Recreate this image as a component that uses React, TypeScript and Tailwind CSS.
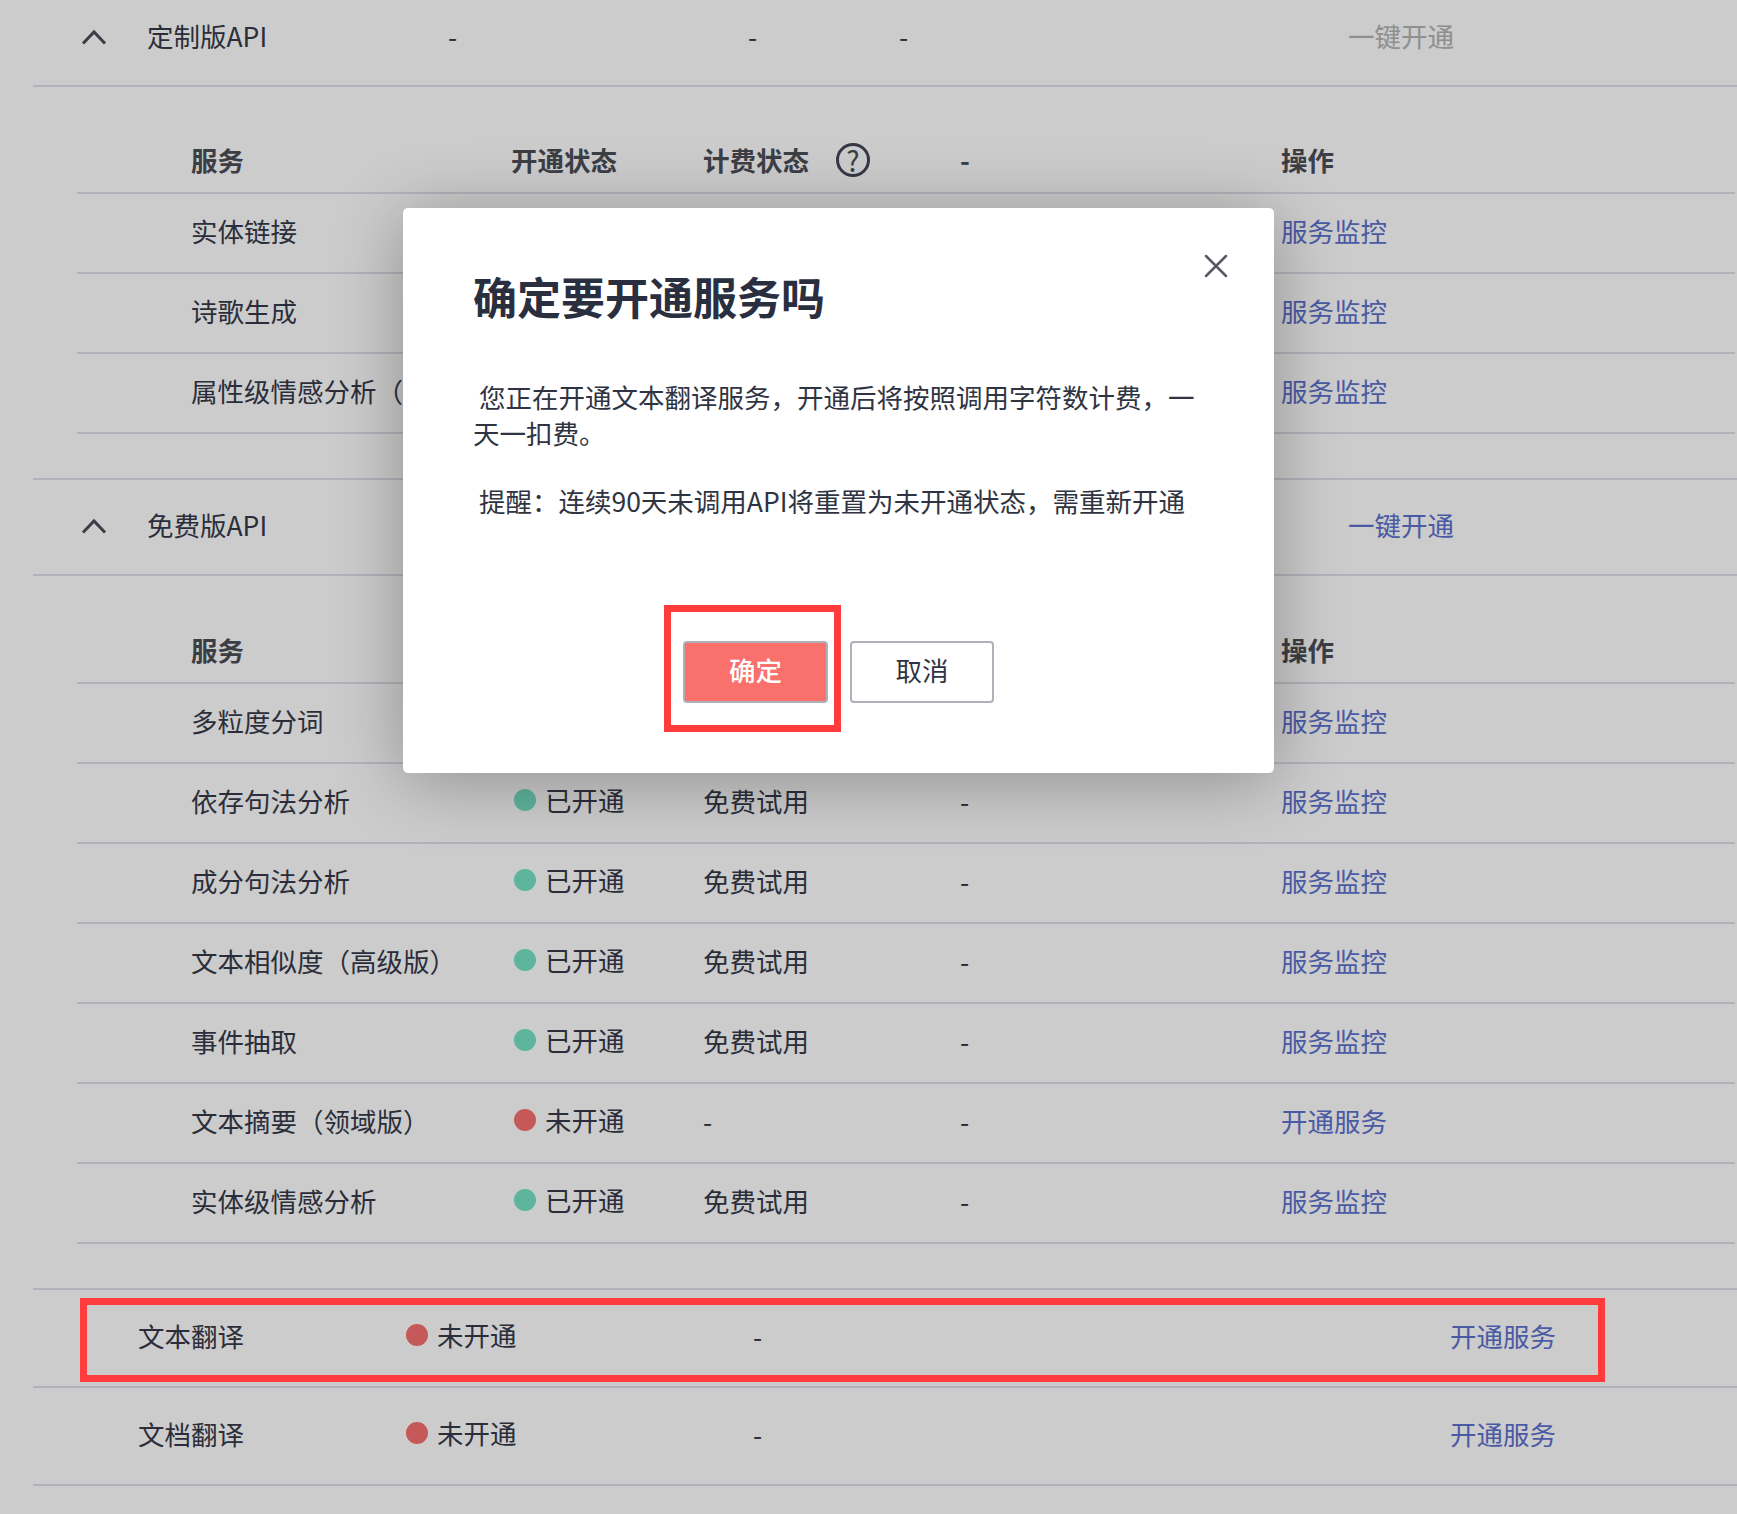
import React from 'react';
import { X } from 'lucide-react';

type Row = { name: string, on: boolean, bill: string, link: string }

const customRows: Row[] = [
    { name: '实体链接', on: true, bill: '免费试用', link: '服务监控' },
    { name: '诗歌生成', on: true, bill: '免费试用', link: '服务监控' },
    { name: '属性级情感分析（高级版）', on: true, bill: '免费试用', link: '服务监控' },
];

const freeRows: Row[] = [
    { name: '多粒度分词', on: true, bill: '免费试用', link: '服务监控' },
    { name: '依存句法分析', on: true, bill: '免费试用', link: '服务监控' },
    { name: '成分句法分析', on: true, bill: '免费试用', link: '服务监控' },
    { name: '文本相似度（高级版）', on: true, bill: '免费试用', link: '服务监控' },
    { name: '事件抽取', on: true, bill: '免费试用', link: '服务监控' },
    { name: '文本摘要（领域版）', on: false, bill: '-', link: '开通服务' },
    { name: '实体级情感分析', on: true, bill: '免费试用', link: '服务监控' },
];

const Status = ({ on }: { on: boolean }) => (
    <div className='flex items-center'>
        <span className={`h-[22px] w-[22px] -translate-y-px rounded-full ${on ? 'bg-[#77e1c3]' : 'bg-[#f77070]'}`} />
        <span className='ml-[9px] -translate-y-[1px] whitespace-nowrap'>{on ? '已开通' : '未开通'}</span>
    </div>
);

const SectionHead = ({ name, muted }: { name: string, muted?: boolean }) => (
    <div className='ml-[33px] grid h-[96px] grid-cols-[114px_301px_300px_151px_449px_1fr] items-center border-b-2 border-[#dfdfe9] pb-[4px]'>
        <svg width='26' height='16' viewBox='0 0 26 16' fill='none' className='ml-[48px] mt-[2px]'>
            <path d='M2 14.5 13 3l11 11.5' stroke='#4a4d58' strokeWidth='3' />
        </svg>
        <span className='whitespace-nowrap'>{name}</span>
        <span>-</span>
        <span>-</span>
        <span>-</span>
        <span className={`whitespace-nowrap ${muted ? 'text-[#b3b3b3]' : 'text-[#5d71ce]'}`}>一键开通</span>
    </div>
);

const TableHead = () => (
    <div className='ml-[77px] mr-[2px] grid h-[64px] grid-cols-[114px_320px_192px_257px_321px_1fr] items-center border-b-2 border-[#dfdfe9] pb-[2px] font-bold text-[#4c4e58]'>
        <span className='col-start-2'>服务</span>
        <span>开通状态</span>
        <div className='flex items-center'>
            <span>计费状态</span>
            <span className='ml-[27px] flex h-[34px] w-[34px] items-center justify-center rounded-full border-[3px] border-[#434757] text-[28px] font-normal leading-none'>?</span>
        </div>
        <span>-</span>
        <span>操作</span>
    </div>
);

const ServiceRows = ({ rows }: { rows: Row[] }) => (
    <div className='ml-[77px] mr-[2px]'>
        {rows.map(row => (
            <div key={row.name} className='grid h-[80px] grid-cols-[114px_320px_192px_257px_321px_1fr] items-center border-b-2 border-[#dfdfe9] pb-[5px]'>
                <span className='col-start-2 whitespace-nowrap'>{row.name}</span>
                <div className='pl-[3px]'><Status on={row.on} /></div>
                <span>{row.bill}</span>
                <span>-</span>
                <span className='text-[#5d71ce]'>{row.link}</span>
            </div>
        ))}
    </div>
);

const TranslateRow = ({ name }: { name: string }) => (
    <div className='ml-[33px] grid h-[98px] grid-cols-[105px_268px_347px_697px_1fr] items-center border-b-2 border-[#dfdfe9] pb-[5px]'>
        <span className='col-start-2'>{name}</span>
        <div><Status on={false} /></div>
        <span>-</span>
        <span className='text-[#5d71ce]'>开通服务</span>
    </div>
);

export default function App() {
    return (
        <div className="relative h-[1514px] w-full overflow-hidden bg-white font-['Noto_Sans_CJK_SC','Noto_Sans',sans-serif] text-[26.5px] text-[#363a49]">
            <div className='-mt-[9px]'>
                <SectionHead name='定制版API' muted />
                <div className='h-[43px]' />
                <TableHead />
                <ServiceRows rows={customRows} />
                <div className='h-[44px]' />
                <div className='ml-[33px] border-t-2 border-[#dfdfe9]' />
                <SectionHead name='免费版API' />
                <div className='h-[44px]' />
                <TableHead />
                <ServiceRows rows={freeRows} />
                <div className='h-[44px]' />
                <div className='ml-[33px] border-t-2 border-[#dfdfe9]' />
                <TranslateRow name='文本翻译' />
                <TranslateRow name='文档翻译' />
            </div>

            <div className='absolute inset-0 bg-black/20' />

            <div className='absolute left-[403px] top-[208px] h-[565px] w-[871px] rounded-[5px] bg-white px-[70px] shadow-[0_8px_70px_rgba(0,0,0,0.3)]'>
                <button type='button' className='absolute right-[38px] top-[38px] text-[#555a66]'>
                    <X size={40} strokeWidth={1.5} />
                </button>
                <h1 className='mt-[57px] text-[44px] font-bold leading-[62px] text-[#2a2f3f]'>确定要开通服务吗</h1>
                <p className='mt-[52px] leading-[36px] text-[#303442]'>&nbsp;您正在开通文本翻译服务，开通后将按照调用字符数计费，一天一扣费。</p>
                <p className='mt-[32px] leading-[36px] text-[#303442]'>&nbsp;提醒：连续90天未调用API将重置为未开通状态，需重新开通</p>
                <div className='mt-[122px] flex justify-center gap-[22px]'>
                    <button type='button' className='h-[62px] w-[145px] rounded-[4px] border-2 border-[#b0b0bb] bg-[#f9706c] pb-[4px] font-medium text-white'>确定</button>
                    <button type='button' className='h-[62px] w-[144px] rounded-[4px] border-2 border-[#b0b0bb] bg-white pb-[4px] text-[#303442]'>取消</button>
                </div>
            </div>

            <div className='absolute left-[664px] top-[605px] h-[127px] w-[177px] border-[7px] border-[#ff3b3b]' />
            <div className='absolute left-[80px] top-[1298px] h-[84px] w-[1525px] border-[7px] border-[#ff3b3b]' />
        </div>
    );
}
